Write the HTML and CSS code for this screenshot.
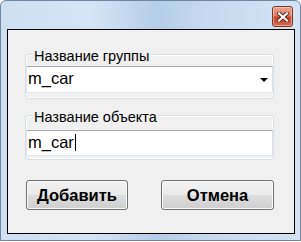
FILE: index.html
```html
<!DOCTYPE html>
<html lang="ru">
<head>
    <meta charset="UTF-8">
    <title>Добавить объект</title>
    <link rel="stylesheet" href="styles.css">
</head>
<body>
    <div class="window">
        <div class="titlebar">
            <button class="close" type="button" aria-label="Закрыть">
                <svg width="12" height="10" viewBox="0 0 12 10">
                    <path d="M2 1.5 L10 8.5 M10 1.5 L2 8.5" stroke="#5a2219" stroke-width="4" stroke-linecap="square" fill="none"/>
                    <path d="M2 1.5 L10 8.5 M10 1.5 L2 8.5" stroke="#ffffff" stroke-width="2.2" stroke-linecap="square" fill="none"/>
                </svg>
            </button>
        </div>
        <div class="client">
            <fieldset class="group group-first">
                <legend>Название группы</legend>
                <div class="combo">
                    <span>m_car</span>
                    <svg class="combo-arrow" width="8" height="4" viewBox="0 0 8 4"><path d="M0 0 H8 L4 4 Z" fill="#000"/></svg>
                </div>
            </fieldset>
            <fieldset class="group">
                <legend>Название объекта</legend>
                <div class="textbox">m_car<span class="caret"></span></div>
            </fieldset>
            <div class="buttons">
                <button class="btn btn-add" type="button">Добавить</button>
                <button class="btn btn-cancel" type="button">Отмена</button>
            </div>
        </div>
    </div>
</body>
</html>
```

FILE: styles.css
```css
body {
    margin: 0;
    background: #ffffff;
    font-family: "Liberation Sans", Arial, sans-serif;
}

/* marco de la ventana (estilo Aero claro) */
.window {
    width: 301px;
    height: 241px;
    box-sizing: border-box;
    border: 1px solid #6f87a3;
    border-radius: 6px 6px 0 0;
    padding: 0 5px 6px 6px;
    display: flex;
    flex-direction: column;
    background: linear-gradient(90deg, #cddff1 0%, #d6e5f5 30%, #b4cde8 52%, #c3d7ee 65%, #d4e4f4 100%);
}
.titlebar {
    height: 28px;
    box-sizing: border-box;
    padding: 5px 2px 0 0;
    display: flex;
    justify-content: flex-end;
    align-items: flex-start;
}
.close {
    width: 21px;
    height: 21px;
    padding: 0;
    border: 1px solid #7c3428;
    border-radius: 3px;
    background: linear-gradient(#eaa590 0%, #dc7a62 45%, #c8452c 55%, #d9694c 100%);
    box-shadow: inset 0 0 0 1px rgba(255, 220, 210, 0.5);
    display: flex;
    justify-content: center;
    align-items: center;
}

/* area cliente */
.client {
    flex: 1;
    border: 1px solid #000;
    background: #f0f0f0;
    padding: 14px 20px 0 17px;
    display: flex;
    flex-direction: column;
}
.group {
    margin: 6px 0 0;
    padding: 0 0 3px;
    min-width: 0;
    border: 1px solid #d5dfe5;
    border-radius: 3px;
    box-shadow: inset 0 0 0 1px #ffffff;
}
.group-first {
    margin-top: 0;
    padding-bottom: 5px;
}
.group legend {
    margin-left: 6px;
    padding: 4px 2px 0;
    line-height: 16px;
    font-size: 14.5px;
    color: #000;
    background: #f0f0f0;
}

.combo,
.textbox {
    box-sizing: border-box;
    background: #fff;
    border: 1px solid;
    border-color: #abadb3 #e2e3ea #e3e9ef #e2e3ea;
    font-size: 16.5px;
    color: #000;
    display: flex;
    align-items: center;
}
.combo {
    height: 27px;
    margin-top: 2px;
    padding: 0 4px 2px 1px;
    justify-content: space-between;
}
.combo-arrow {
    margin-top: 2px;
}
.textbox {
    height: 26px;
    margin-top: 5px;
    padding: 0 0 1px 1px;
}
.caret {
    display: inline-block;
    width: 1px;
    height: 17px;
    margin-left: 1px;
    background: #000;
}

/* botones */
.buttons {
    margin: 20px 0 0 1px;
    display: flex;
    gap: 33px;
}
.btn {
    height: 30px;
    padding: 0;
    border: 1px solid #707070;
    border-radius: 3px;
    background: linear-gradient(#f2f2f2 0%, #ebebeb 48%, #dddddd 52%, #cfcfcf 100%);
    box-shadow: inset 0 0 0 1px #fbfbfb;
    font-family: "Liberation Sans", Arial, sans-serif;
    font-size: 16.5px;
    font-weight: bold;
    color: #000;
}
.btn-add {
    width: 103px;
}
.btn-cancel {
    width: 114px;
}
```
